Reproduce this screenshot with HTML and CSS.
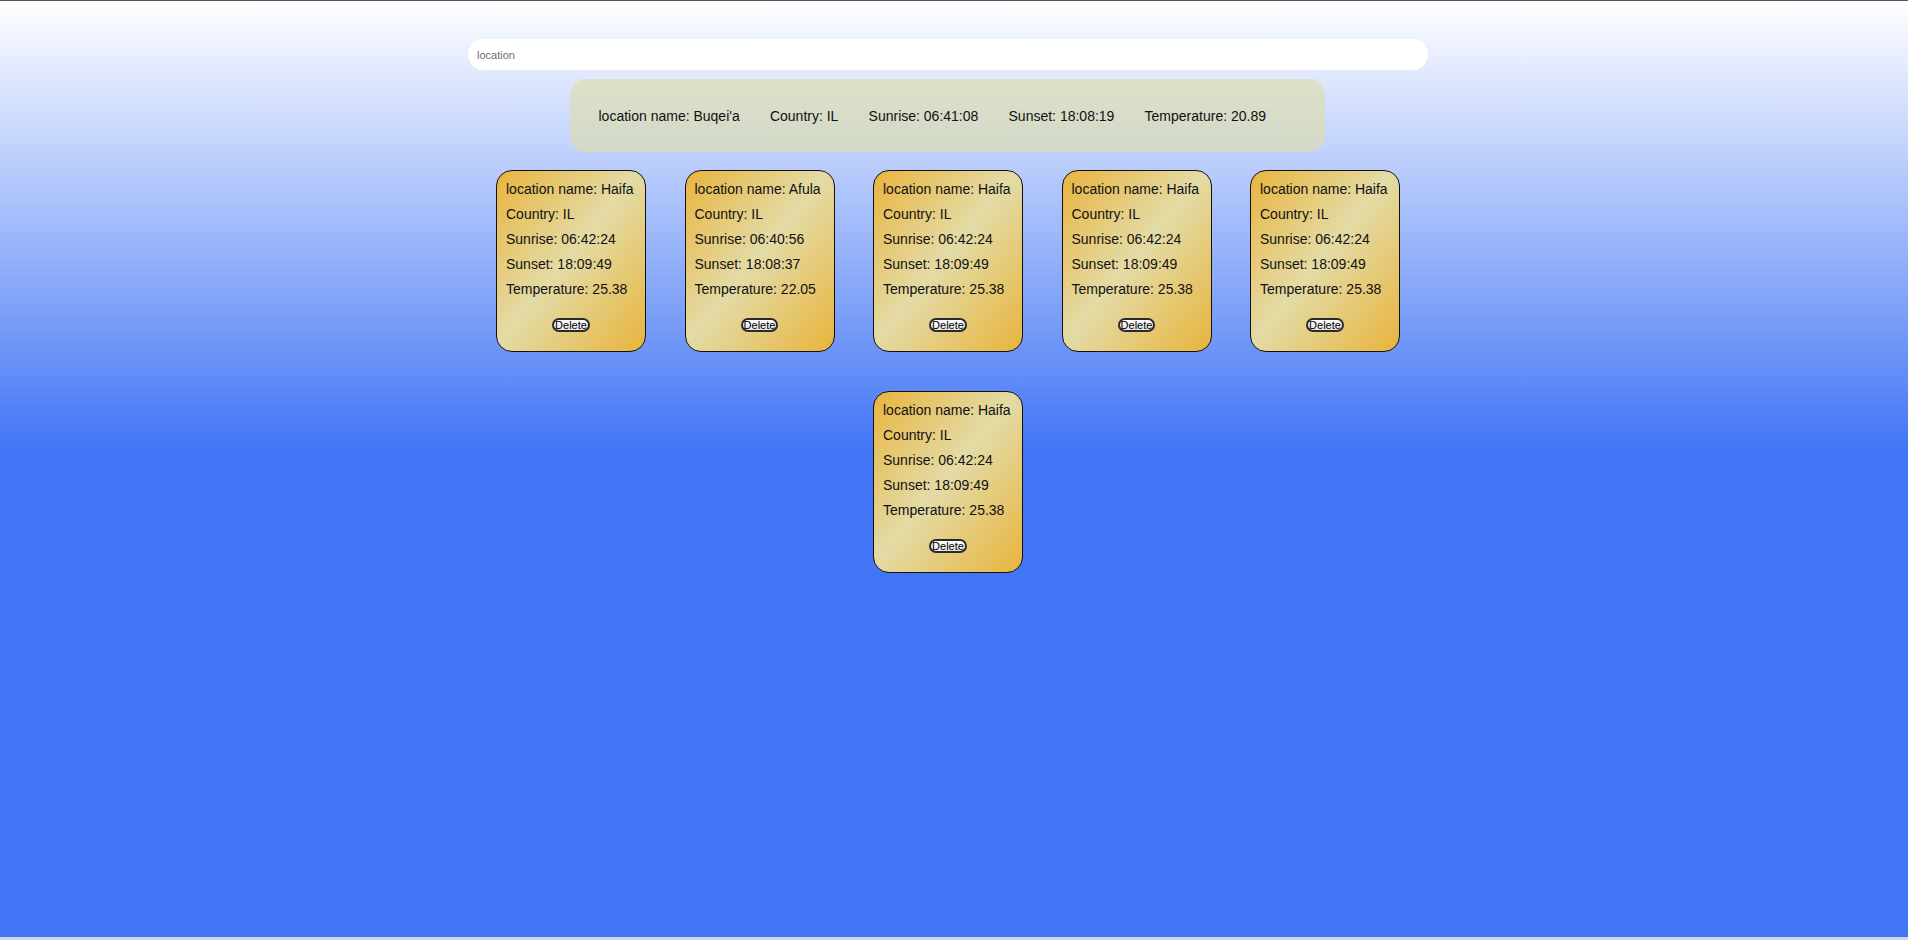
FILE: index.html
```html
<!DOCTYPE html>
<html>
<head>
<meta charset="utf-8">
<link rel="stylesheet" href="styles.css">
</head>
<body>
<div class="page">
  <input class="search" type="text" placeholder="location">
  <div class="summary">
    <span class="field">location name: Buqei'a</span>
    <span class="field">Country: IL</span>
    <span class="field">Sunrise: 06:41:08</span>
    <span class="field">Sunset: 18:08:19</span>
    <span class="field">Temperature: 20.89</span>
  </div>
  <div class="cards">
    <div class="card">
      <div class="line">location name: Haifa</div>
      <div class="line">Country: IL</div>
      <div class="line">Sunrise: 06:42:24</div>
      <div class="line">Sunset: 18:09:49</div>
      <div class="line">Temperature: 25.38</div>
      <button class="del">Delete</button>
    </div>
    <div class="card">
      <div class="line">location name: Afula</div>
      <div class="line">Country: IL</div>
      <div class="line">Sunrise: 06:40:56</div>
      <div class="line">Sunset: 18:08:37</div>
      <div class="line">Temperature: 22.05</div>
      <button class="del">Delete</button>
    </div>
    <div class="card">
      <div class="line">location name: Haifa</div>
      <div class="line">Country: IL</div>
      <div class="line">Sunrise: 06:42:24</div>
      <div class="line">Sunset: 18:09:49</div>
      <div class="line">Temperature: 25.38</div>
      <button class="del">Delete</button>
    </div>
    <div class="card">
      <div class="line">location name: Haifa</div>
      <div class="line">Country: IL</div>
      <div class="line">Sunrise: 06:42:24</div>
      <div class="line">Sunset: 18:09:49</div>
      <div class="line">Temperature: 25.38</div>
      <button class="del">Delete</button>
    </div>
    <div class="card">
      <div class="line">location name: Haifa</div>
      <div class="line">Country: IL</div>
      <div class="line">Sunrise: 06:42:24</div>
      <div class="line">Sunset: 18:09:49</div>
      <div class="line">Temperature: 25.38</div>
      <button class="del">Delete</button>
    </div>
    <div class="card">
      <div class="line">location name: Haifa</div>
      <div class="line">Country: IL</div>
      <div class="line">Sunrise: 06:42:24</div>
      <div class="line">Sunset: 18:09:49</div>
      <div class="line">Temperature: 25.38</div>
      <button class="del">Delete</button>
    </div>
  </div>
</div>
</body>
</html>
```

FILE: styles.css
```css
html {
  margin: 0;
  padding: 0;
  height: 100%;
  background: #d3d8e6;
}

body {
  margin: 0;
  height: 937px;
  box-sizing: border-box;
  border-top: 1px solid #555555;
  background: linear-gradient(to bottom, #ffffff 0px, #4275f5 450px, #4275f5 100%);
  font-family: "Liberation Sans", Arial, sans-serif;
  color: #111111;
  overflow: hidden;
}

.page {
  padding: 38px 12px 0 0;
  display: flex;
  flex-direction: column;
  align-items: center;
}

.search {
  width: 960px;
  height: 31px;
  box-sizing: border-box;
  border: none;
  outline: none;
  border-radius: 16px;
  background: #ffffff;
  padding: 0 9px;
  font-family: "Liberation Sans", Arial, sans-serif;
  font-size: 11px;
  color: #333;
}

.search::placeholder {
  color: #6f6f6f;
}

.summary {
  margin-top: 9px;
  width: 755px;
  height: 73px;
  box-sizing: border-box;
  border-radius: 16px;
  background: linear-gradient(to bottom, #dfe0c8, #d2d9c8);
  display: flex;
  align-items: center;
  padding: 0 14px;
  font-size: 14px;
  margin-left: -1px;
}

.field {
  padding-left: 15px;
  padding-right: 15.2px;
}

.field:first-child {
  padding-left: 14.5px;
}

.cards {
  margin-top: 18px;
  width: 960px;
  display: flex;
  flex-wrap: wrap;
  justify-content: center;
  column-gap: 38.5px;
  row-gap: 39px;
}

.card {
  width: 150px;
  height: 182px;
  box-sizing: border-box;
  border: 1px solid #111111;
  border-radius: 16px;
  padding: 6px 0 0 9px;
  background: linear-gradient(to bottom right, #e9b43e 0%, #e3dba6 48%, #e8b43c 100%);
  font-size: 14px;
  display: flex;
  flex-direction: column;
  white-space: nowrap;
}

.line {
  line-height: 25px;
}

.del {
  align-self: center;
  margin: 16px 0 0 -9px;
  font-family: "Liberation Sans", Arial, sans-serif;
  font-size: 11px;
  line-height: 10px;
  padding: 0 1px;
  border: 2px solid #2a2a2a;
  border-radius: 8px;
  background: linear-gradient(to bottom, #ffffff, #e6e6e6);
  color: #000;
}
```
